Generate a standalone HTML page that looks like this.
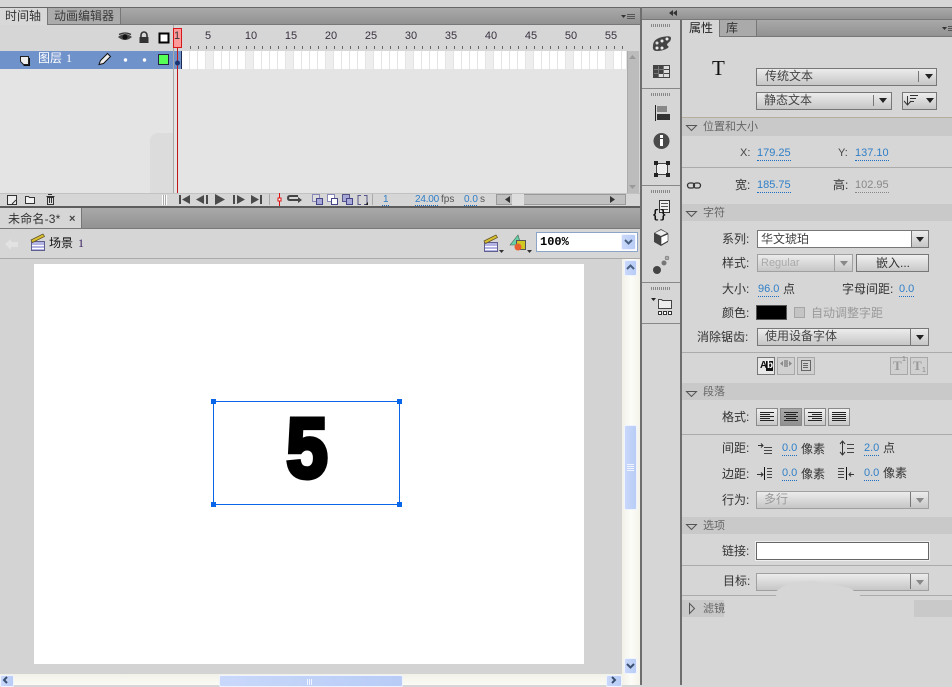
<!DOCTYPE html>
<html lang="zh">
<head>
<meta charset="utf-8">
<title>Flash</title>
<style>
html,body{margin:0;padding:0;}
body{width:952px;height:685px;overflow:hidden;position:relative;background:#d6d6d6;font-family:"Liberation Sans","WenQuanYi Zen Hei","Noto Sans CJK SC",sans-serif;font-size:12px;color:#333;}
.b{position:absolute;}
.t{position:absolute;height:16px;line-height:16px;white-space:nowrap;color:#333;}
.v{color:#2f7fc8;border-bottom:1px dotted #1f6fc0;height:13px;line-height:13px;}
.r{position:absolute;top:29px;width:30px;text-align:center;font-size:11px;line-height:14px;color:#3a3040;}
.tabbar{background:linear-gradient(#a9a9a9,#929292);}
.sec{position:absolute;left:682px;width:270px;background:#c9c9c9;}
.sec span{position:absolute;left:21px;top:1px;line-height:16px;font-size:11px;color:#666;}
.line{position:absolute;left:682px;width:270px;height:1px;background:#ababab;}
.sel{position:absolute;box-sizing:border-box;border:1px solid #777;background:linear-gradient(#ececec,#c6c6c6);height:18px;line-height:16px;color:#444;}
.sel span{position:absolute;top:-1px;white-space:nowrap;}
.sel.dis{border-color:#a0a0a0;color:#999;}
.btn{position:absolute;box-sizing:border-box;border:1px solid #8a8a8a;background:linear-gradient(#f0f0f0,#c8c8c8);}
.xbtn{position:absolute;box-sizing:border-box;border:1px solid #eef3ff;border-radius:2px;background:linear-gradient(90deg,#c9d8fa,#b8ccf6);}
svg.o{position:absolute;left:0;top:0;}
</style>
</head>
<body>
<!-- timeline -->
<div class="b" style="left:0;top:7px;width:640px;height:1px;background:#666"></div>
<div class="b tabbar" style="left:0;top:8px;width:640px;height:16px"></div>
<div class="b" style="left:0;top:24px;width:640px;height:1px;background:#777"></div>
<div class="b" style="left:0;top:8px;width:47px;height:17px;background:#d8d8d8"></div>
<div class="b" style="left:47px;top:8px;width:74px;height:16px;background:#ababab;border-left:1px solid #777;border-right:1px solid #777;box-sizing:border-box"></div>
<div class="t" style="left:5px;top:8px">时间轴</div>
<div class="t" style="left:54px;top:8px;color:#3a3a3a">动画编辑器</div>
<div class="b" style="left:0;top:25px;width:640px;height:26px;background:#d6d6d6"></div>
<div class="b" style="left:0;top:51px;width:638px;height:142px;background:#e4e4e4"></div>
<div class="b" style="left:638px;top:51px;width:2px;height:142px;background:#d6d6d6"></div>
<div class="b" style="left:150px;top:133px;width:24px;height:60px;background:#dcdcdc;border-top-left-radius:8px"></div>
<div class="b" style="left:0;top:51px;width:174px;height:18px;background:#7092ca"></div>
<div class="b" style="left:174px;top:51px;width:452px;height:18px;background:repeating-linear-gradient(90deg,#fff 0,#fff 7px,#e4e4e4 7px,#e4e4e4 8px,#fff 8px,#fff 15px,#e4e4e4 15px,#e4e4e4 16px,#fff 16px,#fff 23px,#e4e4e4 23px,#e4e4e4 24px,#fff 24px,#fff 31px,#e4e4e4 31px,#e4e4e4 32px,#eeeeee 32px,#eeeeee 39px,#e4e4e4 39px,#e4e4e4 40px)"></div>
<div class="b" style="left:174px;top:51px;width:7px;height:18px;background:#7092ca"></div>
<div class="b" style="left:181px;top:51px;width:1px;height:18px;background:#1a2a55"></div>
<div class="b" style="left:173px;top:25px;width:1px;height:181px;background:#a8a8a8"></div>
<div class="t" style="left:38px;top:50px;color:#fff">图层</div>
<div class="t" style="left:66px;top:50px;color:#fff;font-family:'Liberation Serif',serif">1</div>
<div class="b" style="left:173px;top:28px;width:9px;height:20px;box-sizing:border-box;background:#ff9a9a;border:1px solid #d81818"></div>
<div class="r" style="left:162px;color:#333">1</div>
<div class="r" style="left:193px">5</div><div class="r" style="left:236px">10</div><div class="r" style="left:276px">15</div><div class="r" style="left:316px">20</div><div class="r" style="left:356px">25</div><div class="r" style="left:396px">30</div><div class="r" style="left:436px">35</div><div class="r" style="left:476px">40</div><div class="r" style="left:516px">45</div><div class="r" style="left:556px">50</div><div class="r" style="left:596px">55</div>
<div class="b" style="left:190px;top:46px;width:436px;height:3px;background:repeating-linear-gradient(90deg,#666 0,#666 1px,transparent 1px,transparent 8px)"></div>
<div class="b" style="left:627px;top:51px;width:11px;height:142px;background:#bcbcbc;border-left:1px solid #aaa"></div>
<!-- timeline control row -->
<div class="b" style="left:0;top:193px;width:640px;height:13px;background:#d6d6d6;border-top:1px solid #c2c2c2;box-sizing:border-box"></div>
<div class="b" style="left:0;top:206px;width:640px;height:2px;background:#5c5c5c"></div>
<div class="t" style="left:383px;top:192px;font-size:10px;color:#2f7fc8">1</div>
<div class="b" style="left:382px;top:205px;width:7px;border-top:1px dotted #1f6fc0"></div>
<div class="t" style="left:415px;top:192px;font-size:10px;color:#2f7fc8;letter-spacing:-.2px">24.00</div>
<div class="b" style="left:415px;top:205px;width:23px;border-top:1px dotted #1f6fc0"></div>
<div class="t" style="left:441px;top:192px;font-size:10px;color:#555">fps</div>
<div class="t" style="left:464px;top:192px;font-size:10px;color:#2f7fc8">0.0</div>
<div class="b" style="left:464px;top:205px;width:13px;border-top:1px dotted #1f6fc0"></div>
<div class="t" style="left:480px;top:192px;font-size:10px;color:#555">s</div>
<div class="b" style="left:496px;top:194px;width:130px;height:11px;background:#c0c0c0;border:1px solid #9a9a9a;box-sizing:border-box"></div>
<div class="b" style="left:512px;top:194px;width:12px;height:11px;background:#dedede"></div>
<!-- stage tabs -->
<div class="b tabbar" style="left:0;top:208px;width:640px;height:20px"></div>
<div class="b" style="left:0;top:208px;width:82px;height:21px;background:#d6d6d6;border-right:1px solid #777;box-sizing:border-box"></div>
<div class="t" style="left:8px;top:211px;letter-spacing:.2px">未命名-3*</div>
<div class="t" style="left:69px;top:211px;font-size:11px;color:#444;font-weight:bold">×</div>
<div class="b" style="left:0;top:228px;width:640px;height:1px;background:#7a7a7a"></div>
<div class="t" style="left:49px;top:235px;color:#111">场景</div>
<div class="t" style="left:78px;top:235px;color:#3a2060;font-family:'Liberation Serif',serif">1</div>
<div class="b" style="left:536px;top:232px;width:102px;height:20px;box-sizing:border-box;background:#fff;border:1px solid #8aa5c8"></div>
<div class="t" style="left:540px;top:234px;font:bold 12px/16px 'Liberation Mono',monospace;color:#000">100%</div>
<div class="xbtn" style="left:621px;top:234px;width:15px;height:16px"></div>
<!-- stage -->
<div class="b" style="left:0;top:258px;width:640px;height:1px;background:#aaa"></div>
<div class="b" style="left:0;top:259px;width:622px;height:415px;background:#d3d3d3"></div>
<div class="b" style="left:34px;top:264px;width:550px;height:400px;background:#fff"></div>
<div class="b" style="left:213px;top:401px;width:187px;height:104px;box-sizing:border-box;border:1px solid #0a66e8"></div>
<div class="b" style="left:211px;top:399px;width:5px;height:5px;background:#0a66e8"></div>
<div class="b" style="left:397px;top:399px;width:5px;height:5px;background:#0a66e8"></div>
<div class="b" style="left:211px;top:502px;width:5px;height:5px;background:#0a66e8"></div>
<div class="b" style="left:397px;top:502px;width:5px;height:5px;background:#0a66e8"></div>
<div class="b" style="left:270px;top:393px;width:74px;height:110px;text-align:center;font:bold 84px/110px 'Liberation Sans',sans-serif;color:#000;-webkit-text-stroke:5px #000;transform:scaleX(.88)">5</div>
<!-- scrollbars -->
<div class="b" style="left:622px;top:259px;width:18px;height:426px;background:linear-gradient(90deg,#f2f1e8,#fcfcf8 50%,#f4f3ea)"></div>
<div class="b" style="left:0;top:674px;width:622px;height:11px;background:linear-gradient(#f2f1e8,#fbfbf6)"></div>
<div class="xbtn" style="left:624px;top:260px;width:13px;height:16px"></div>
<div class="xbtn" style="left:624px;top:425px;width:13px;height:85px"></div>
<div class="xbtn" style="left:624px;top:658px;width:13px;height:16px"></div>
<div class="xbtn" style="left:0;top:675px;width:14px;height:12px"></div>
<div class="xbtn" style="left:219px;top:675px;width:184px;height:12px"></div>
<div class="xbtn" style="left:606px;top:675px;width:16px;height:12px"></div>
<!-- dock -->
<div class="b" style="left:640px;top:7px;width:2px;height:678px;background:#6e6e6e"></div>
<div class="b" style="left:680px;top:20px;width:2px;height:665px;background:#6e6e6e"></div>
<div class="b" style="left:642px;top:7px;width:310px;height:1px;background:#666"></div>
<div class="b tabbar" style="left:642px;top:8px;width:310px;height:11px"></div>
<div class="b" style="left:642px;top:19px;width:310px;height:1px;background:#777"></div>
<div class="b" style="left:642px;top:88px;width:38px;height:1px;background:#888"></div>
<div class="b" style="left:642px;top:185px;width:38px;height:1px;background:#888"></div>
<div class="b" style="left:642px;top:282px;width:38px;height:1px;background:#888"></div>
<div class="b" style="left:642px;top:323px;width:38px;height:1px;background:#888"></div>
<!-- properties tabs -->
<div class="b tabbar" style="left:682px;top:20px;width:270px;height:16px"></div>
<div class="b" style="left:682px;top:36px;width:270px;height:1px;background:#777"></div>
<div class="b" style="left:682px;top:20px;width:37px;height:17px;background:#d6d6d6"></div>
<div class="b" style="left:719px;top:20px;width:38px;height:16px;box-sizing:border-box;background:#aaa;border-left:1px solid #777;border-right:1px solid #777"></div>
<div class="t" style="left:689px;top:20px;color:#222">属性</div>
<div class="t" style="left:726px;top:20px;color:#333">库</div>
<div class="t" style="left:712px;top:58px;height:20px;font:normal 21px/20px 'Liberation Serif',serif;color:#111">T</div>
<div class="sel" style="left:756px;top:68px;width:181px"><span style="left:8px">传统文本</span></div>
<div class="sel" style="left:756px;top:92px;width:136px"><span style="left:7px">静态文本</span></div>
<div class="sel" style="left:902px;top:92px;width:35px"></div>
<div class="b" style="left:682px;top:117px;width:270px;height:1px;background:#b5ae9c"></div>
<div class="sec" style="top:118px;height:18px"><span>位置和大小</span></div>
<div class="t" style="left:740px;top:145px;font-size:11px;color:#444">X:</div>
<div class="t v" style="left:757px;top:147px;font-size:11px">179.25</div>
<div class="t" style="left:838px;top:145px;font-size:11px;color:#444">Y:</div>
<div class="t v" style="left:855px;top:147px;font-size:11px">137.10</div>
<div class="line" style="top:167px"></div>
<div class="t" style="left:735px;top:177px">宽:</div>
<div class="t v" style="left:757px;top:179px;font-size:11px">185.75</div>
<div class="t" style="left:833px;top:177px">高:</div>
<div class="t v" style="left:855px;top:179px;font-size:11px;color:#888;border-color:#888">102.95</div>
<div class="sec" style="top:204px;height:17px"><span>字符</span></div>
<div class="t" style="left:722px;top:231px">系列:</div>
<div class="b" style="left:757px;top:230px;width:172px;height:18px;box-sizing:border-box;border:1px solid #777;background:#fff"></div>
<div class="t" style="left:761px;top:231px;color:#444">华文琥珀</div>
<div class="sel" style="left:911px;top:230px;width:18px"></div>
<div class="t" style="left:722px;top:255px">样式:</div>
<div class="sel dis" style="left:757px;top:254px;width:96px"><span style="left:3px;top:0;font-size:11px;color:#aaa">Regular</span></div>
<div class="b" style="left:834px;top:255px;width:1px;height:16px;background:#a0a0a0"></div>
<div class="btn" style="left:856px;top:254px;width:73px;height:18px;border-color:#777"></div>
<div class="t" style="left:876px;top:255px;color:#333">嵌入...</div>
<div class="t" style="left:722px;top:281px">大小:</div>
<div class="t v" style="left:758px;top:283px;font-size:11px">96.0</div>
<div class="t" style="left:783px;top:281px">点</div>
<div class="t" style="left:842px;top:281px">字母间距:</div>
<div class="t v" style="left:899px;top:283px;font-size:11px">0.0</div>
<div class="t" style="left:722px;top:305px">颜色:</div>
<div class="b" style="left:756px;top:305px;width:31px;height:15px;background:#000;border:1px solid #555;box-sizing:border-box"></div>
<div class="b" style="left:794px;top:307px;width:11px;height:11px;background:#c4c4c4;border:1px solid #a5a5a5;box-sizing:border-box"></div>
<div class="t" style="left:811px;top:305px;color:#999">自动调整字距</div>
<div class="t" style="left:697px;top:329px">消除锯齿:</div>
<div class="sel" style="left:757px;top:328px;width:172px"><span style="left:7px">使用设备字体</span></div>
<div class="line" style="top:352px"></div>
<div class="b" style="left:757px;top:357px;width:18px;height:18px;box-sizing:border-box;border:1px solid #777;background:#e8e8e8"></div>
<div class="b" style="left:777px;top:357px;width:18px;height:18px;box-sizing:border-box;border:1px solid #a8a8a8;background:#d0d0d0"></div>
<div class="b" style="left:797px;top:357px;width:18px;height:18px;box-sizing:border-box;border:1px solid #a8a8a8;background:#d0d0d0"></div>
<div class="b" style="left:890px;top:357px;width:18px;height:18px;box-sizing:border-box;border:1px solid #a8a8a8;background:#d0d0d0"></div>
<div class="b" style="left:910px;top:357px;width:18px;height:18px;box-sizing:border-box;border:1px solid #a8a8a8;background:#d0d0d0"></div>
<div class="b" style="left:766px;top:361px;width:7px;height:10px;background:#111"></div>
<div class="t" style="left:760px;top:358px;font:bold 10px/16px 'Liberation Sans',sans-serif;color:#111">A</div>
<div class="t" style="left:767px;top:358px;font:bold 10px/16px 'Liberation Sans',sans-serif;color:#fff">b</div>
<div class="t" style="left:893px;top:358px;font:bold 13px/16px 'Liberation Serif',serif;color:#999">T</div>
<div class="t" style="left:913px;top:358px;font:bold 13px/16px 'Liberation Serif',serif;color:#999">T</div>
<div class="t" style="left:902px;top:355px;font:7px/10px 'Liberation Sans',sans-serif;color:#888;height:10px">1</div>
<div class="t" style="left:922px;top:366px;font:7px/10px 'Liberation Sans',sans-serif;color:#888;height:10px">1</div>
<div class="sec" style="top:383px;height:17px"><span>段落</span></div>
<div class="t" style="left:722px;top:409px">格式:</div>
<div class="btn" style="left:756px;top:408px;width:22px;height:18px"></div>
<div class="btn" style="left:780px;top:408px;width:22px;height:18px;background:linear-gradient(#a8a8a8,#909090)"></div>
<div class="btn" style="left:804px;top:408px;width:22px;height:18px"></div>
<div class="btn" style="left:828px;top:408px;width:22px;height:18px"></div>
<div class="line" style="top:434px"></div>
<div class="t" style="left:722px;top:440px">间距:</div>
<div class="t v" style="left:782px;top:442px;font-size:11px">0.0</div>
<div class="t" style="left:801px;top:441px">像素</div>
<div class="t v" style="left:864px;top:442px;font-size:11px">2.0</div>
<div class="t" style="left:883px;top:440px">点</div>
<div class="t" style="left:722px;top:466px">边距:</div>
<div class="t v" style="left:782px;top:467px;font-size:11px">0.0</div>
<div class="t" style="left:801px;top:466px">像素</div>
<div class="t v" style="left:864px;top:467px;font-size:11px">0.0</div>
<div class="t" style="left:883px;top:465px">像素</div>
<div class="t" style="left:722px;top:492px">行为:</div>
<div class="sel dis" style="left:756px;top:491px;width:173px"><span style="left:7px">多行</span></div>
<div class="sec" style="top:517px;height:17px"><span>选项</span></div>
<div class="t" style="left:722px;top:543px">链接:</div>
<div class="b" style="left:756px;top:542px;width:173px;height:18px;box-sizing:border-box;background:#fff;border:1px solid #666;box-shadow:0 0 0 1px #eee"></div>
<div class="line" style="top:565px"></div>
<div class="t" style="left:723px;top:573px">目标:</div>
<div class="sel dis" style="left:756px;top:573px;width:173px"></div>
<div class="line" style="top:595px"></div>
<div class="b" style="left:682px;top:600px;width:42px;height:17px;background:#c9c9c9"></div>
<div class="b" style="left:914px;top:600px;width:38px;height:17px;background:#c9c9c9"></div>
<div class="t" style="left:703px;top:601px;font-size:11px;color:#666">滤镜</div>
<!-- icons overlay -->
<svg class="o" width="952" height="685" viewBox="0 0 952 685" xmlns="http://www.w3.org/2000/svg">
<!-- retouched blot over target select -->
<path d="M775 592Q785 584 795 582Q805 581 812 581Q822 582 830 584L850 588L862 597L777 598Z" fill="#d6d6d6"/>
<!-- panel menu icons -->
<path d="M621 15h5l-2.500 3z" fill="#333"/><path d="M627 14.500h8M627 16.500h8M627 18.500h8" stroke="#555"/>
<path d="M942 27h5l-2.500 3z" fill="#333"/><path d="M948 26.500h4M948 28.500h4M948 30.500h4" stroke="#555"/>
<path d="M673 10v6l-4-3zM677 10v6l-4-3z" fill="#333"/>
<!-- eye lock outline -->
<path d="M118 37q7-6 14 0q-7 6-14 0z" fill="#444"/><circle cx="125" cy="37" r="2.500" fill="#111"/><path d="M119 34.500q6-3 12 0" stroke="#333" fill="none" stroke-width="1.300"/>
<path d="M141 37v-2a3 3 0 016 0v2" stroke="#333" fill="none" stroke-width="1.600"/><rect x="139.500" y="37" width="9" height="6" fill="#333"/>
<rect x="159.500" y="33.500" width="9" height="9" fill="#fff" stroke="#000" stroke-width="2"/>
<!-- layer row -->
<path d="M20.500 56.500h8v8h-5l-3-3z" fill="#eee" stroke="#222"/><path d="M29.500 58v7.500h-6" stroke="#111" fill="none"/>
<path d="M99 64.500l1.500-4 7-7 3 3-7 7z" fill="#eee" stroke="#111" stroke-width="1"/>
<circle cx="125.500" cy="60" r="1.700" fill="#fff"/><circle cx="144.500" cy="60" r="1.700" fill="#fff"/>
<rect x="158.500" y="54.500" width="10" height="10" fill="#55ff55" stroke="#224" />
<!-- keyframe, playhead -->
<line x1="177.500" y1="48" x2="177.500" y2="193" stroke="#c01818"/>
<circle cx="177.500" cy="63" r="2.500" fill="#1a3570"/>
<!-- tl scroll arrows -->
<path d="M629 59l3.500-4 3.500 4z" fill="#999"/><path d="M629 185l3.500 4 3.500-4z" fill="#999"/>
<!-- new layer / folder / trash -->
<path d="M7.500 195.500h9v9h-9z" fill="#eee" stroke="#333"/><path d="M12 204l4-4" stroke="#333"/>
<path d="M25.500 196.500h3l1 1h5v6h-9z" fill="#f2f2f2" stroke="#333"/>
<path d="M46.500 196.500h8M47.500 197.500h6v7h-6z" fill="#ddd" stroke="#333"/><path d="M49.500 198v5M51.500 198v5M48 194.500h4" stroke="#333"/>
<path d="M162.500 195v10M164.500 195v10M166.500 195v10" stroke="#fff"/><path d="M163.500 195v10M165.500 195v10" stroke="#aaa"/>
<!-- transport -->
<g fill="#4a4a4a"><rect x="179" y="195" width="2" height="9"/><path d="M190 195v9l-8-4.500z"/>
<path d="M204 195v9l-8-4.500z"/><rect x="206" y="195" width="2" height="9"/>
<path d="M215 194v11l10-5.500z"/>
<rect x="233" y="195" width="2" height="9"/><path d="M237 195v9l8-4.500z"/>
<path d="M251 195v9l8-4.500z"/><rect x="260" y="195" width="2" height="9"/></g>
<path d="M269.500 194v11" stroke="#aaa"/>
<path d="M279.500 193v13" stroke="#e01010"/><rect x="278" y="198" width="3" height="3" fill="#fff" stroke="#e01010"/>
<path d="M298 196h-8q-2 0-2 2q0 2 2 2h8" fill="none" stroke="#444" stroke-width="2"/><path d="M298 197v6l4-3z" fill="#444"/>
<rect x="312.500" y="194.500" width="7" height="7" fill="#ddd" stroke="#8888b8"/><rect x="316.500" y="198.500" width="6" height="6" fill="#a8a8d8" stroke="#444488"/>
<rect x="327.500" y="194.500" width="7" height="7" fill="#fff" stroke="#8888b8"/><rect x="331.500" y="198.500" width="6" height="6" fill="#fff" stroke="#444488"/>
<rect x="342.500" y="194.500" width="7" height="7" fill="#a8a8d8" stroke="#555588"/><rect x="346.500" y="198.500" width="6" height="6" fill="#a8a8d8" stroke="#444488"/>
<path d="M361 195.500h-3v9h3M364 195.500h3v9h-3" fill="none" stroke="#555588"/><path d="M368 205v-3l-3 3z" fill="#222"/>
<path d="M372.500 194v11" stroke="#aaa"/>
<path d="M510 196v7l-5-3.500zM610 196v7l5-3.500z" fill="#333"/>
<!-- edit bar -->
<path d="M5 244l6-5v3h7v5h-7v3z" fill="#e2e2e2"/>
<rect x="31.500" y="241.500" width="13" height="9" fill="#b4b4e4" stroke="#606090"/><path d="M32 245.500h12M32 248.500h12" stroke="#fff"/><path d="M31 240l12-6 1.500 2.500-12 6z" fill="#d8c030" stroke="#605020" stroke-width=".7"/>
<g transform="translate(453 1)"><rect x="31.500" y="241.500" width="13" height="9" fill="#b4b4e4" stroke="#606090"/><path d="M32 245.500h12M32 248.500h12" stroke="#fff"/><path d="M31 240l12-6 1.500 2.500-12 6z" fill="#d8c030" stroke="#605020" stroke-width=".7"/></g>
<path d="M499 250h5l-2.500 3zM527 250h5l-2.500 3z" fill="#333"/>
<path d="M510 245l8-10 3 10z" fill="#68d0a8" stroke="#406050" stroke-width=".6"/><rect x="516.500" y="240.500" width="9" height="9" fill="#d0c820" stroke="#555"/><circle cx="518" cy="247" r="3.500" fill="#e86030"/>
<path d="M625 240l3.500 3.500 3.500-3.500" fill="none" stroke="#4a6080" stroke-width="2"/>
<!-- scrollbars glyphs -->
<path d="M627 269l3.500-3.500 3.500 3.500" fill="none" stroke="#4a6080" stroke-width="2"/>
<path d="M627 664l3.500 3.500 3.500-3.500" fill="none" stroke="#3a5070" stroke-width="2"/>
<path d="M627 464.500h7M627 466.500h7M627 468.500h7M627 470.500h7" stroke="#f0f4ff"/>
<path d="M7 677l-3 3 3 3" fill="none" stroke="#3a5070" stroke-width="2"/>
<path d="M612 677l3 3-3 3" fill="none" stroke="#3a5070" stroke-width="2"/>
<path d="M307.500 679v6M309.500 679v6M311.500 679v6" stroke="#f0f4ff"/>
<!-- dock grips -->
<g stroke="#888" stroke-dasharray="1 1" stroke-width="3"><path d="M651 25.500h19M651 94.500h19M651 191.500h19M651 288.500h19"/></g>
<!-- palette -->
<path d="M653 46q0-7 9-9 9-2 9 1t-3 5q-2 2 0 3t-2 3q-4 2-9 2t-4-5z" fill="#444"/><circle cx="657" cy="48" r="1.500" fill="#eee"/><circle cx="662" cy="48" r="1.500" fill="#eee"/><circle cx="657" cy="43" r="1.500" fill="#ddd"/><circle cx="662" cy="41" r="1.500" fill="#eee"/><circle cx="667" cy="39" r="1.500" fill="#eee"/>
<!-- swatches -->
<rect x="653" y="65" width="17" height="13" fill="#444"/><path d="M664 66h5v3h-5zM664 70h5v3h-5zM659 74h10v3h-10z" fill="#ddd"/><path d="M654 69.500h9M654 73.500h4M658.500 66v11M663.500 66v11" stroke="#777"/>
<!-- align -->
<path d="M655.500 105v16" stroke="#222"/><rect x="657" y="106" width="10" height="6" fill="#888"/><rect x="657" y="114" width="13" height="6" fill="#333"/>
<!-- info -->
<circle cx="661.500" cy="141" r="8" fill="#4a4a4a"/><rect x="660" y="139" width="3" height="7" fill="#fff"/><rect x="660" y="135" width="3" height="3" fill="#fff"/>
<!-- transform -->
<rect x="656.500" y="163.500" width="11" height="11" fill="#eee" stroke="#444"/><path d="M654 161h4v4h-4zM666 161h4v4h-4zM654 173h4v4h-4zM666 173h4v4h-4z" fill="#222"/>
<!-- code -->
<rect x="659.500" y="200.500" width="10" height="12" fill="#eee" stroke="#333"/><path d="M661 203.500h7M661 206.500h7M661 209.500h7" stroke="#555"/><text x="652" y="218" font-family="Liberation Mono,monospace" font-weight="bold" font-size="12" fill="#111">{}</text>
<!-- cube -->
<path d="M654 233l7-4 7 4v9l-7 4-7-4z" fill="#444"/><path d="M661 230l6 3-6 3-6-3z" fill="#eee"/><path d="M661 237v8l7-4v-7z" fill="#fff" stroke="#333" stroke-width=".6"/>
<!-- motion -->
<circle cx="657" cy="270" r="4" fill="#444"/><circle cx="664" cy="263" r="2.500" fill="#777"/><circle cx="667" cy="258" r="2" fill="#aaa" stroke="#666" stroke-width=".5"/>
<!-- library -->
<path d="M651 298h5l-2.500 3z" fill="#222"/><path d="M658.500 299.500h3l1 1h9v8h-13z" fill="#eee" stroke="#444"/><path d="M658.500 311.500h3v3h-3zM663.500 311.500h3v3h-3zM668.500 311.500h3v3h-3z" fill="#fff" stroke="#333"/>
<!-- select arrows -->
<g fill="#222"><path d="M925 74h8l-4 5z"/><path d="M879 98h8l-4 5z"/><path d="M926 98h8l-4 5z"/><path d="M916 237h8l-4 5z"/><path d="M916 335h8l-4 5z"/></g>
<g fill="#888"><path d="M840 261h8l-4 5z"/><path d="M916 498h8l-4 5z"/><path d="M916 580h8l-4 5z"/></g>
<g stroke="#777"><path d="M918.500 71v11M873.500 95v11M911.500 231v16M910.500 329v16M910.500 492v15M910.500 574v15"/></g>
<path d="M907.500 96v8M904 101l3.500 4 3.500-4M910 95.500h8M910 98.500h6M910 101.500h4" stroke="#333" fill="none"/>
<!-- section triangles -->
<g fill="none" stroke="#555"><path d="M686.500 125.500h10l-5 5zM686.500 211.500h10l-5 5zM686.500 391.500h10l-5 5zM686.500 524.500h10l-5 5z"/><path d="M689.500 603.500v10l5-5z"/></g>
<!-- link icon -->
<rect x="687.500" y="183" width="7" height="5" rx="2.500" fill="none" stroke="#333" stroke-width="1.300"/><rect x="693.500" y="183" width="7" height="5" rx="2.500" fill="none" stroke="#333" stroke-width="1.300"/>
<!-- small buttons -->
<path d="M783 366l-3-2.500 3-2.500zM789 361l3 2.500-3 2.500z" fill="#888"/><rect x="784" y="360" width="4" height="7" fill="#999"/>
<path d="M801.500 360.500h9v10h-9zM803 363.500h5M803 365.500h5M803 367.500h5" fill="none" stroke="#666"/>
<!-- align buttons -->
<g stroke="#222"><path d="M760 412.500h14M760 414.500h10M760 416.500h14M760 418.500h10M760 420.500h14"/>
<path d="M784 412.500h14M786 414.500h10M784 416.500h14M786 418.500h10M784 420.500h14"/>
<path d="M808 412.500h14M812 414.500h10M808 416.500h14M812 418.500h10M808 420.500h14"/>
<path d="M832 412.500h14M832 414.500h14M832 416.500h14M832 418.500h14M832 420.500h14"/></g>
<!-- para icons -->
<path d="M758 445.500h5M761 443.500l2 2-2 2" stroke="#333" fill="none"/><path d="M764 447.500h8M764 450.500h8M764 453.500h8" stroke="#444"/>
<path d="M842.500 442v12M840 444l2.500-3 2.500 3M840 452l2.500 3 2.500-3" stroke="#333" fill="none"/><path d="M847 444.500h7M847 448.500h7M847 452.500h7" stroke="#444"/>
<path d="M757 474.500h6M761 472.500l2 2-2 2" stroke="#333" fill="none"/><path d="M764.500 467v13" stroke="#111"/><path d="M767 468.500h5M767 471.500h5M767 474.500h5M767 477.500h5" stroke="#444"/>
<path d="M838 468.500h6M838 471.500h6M838 474.500h6M838 477.500h6" stroke="#444"/><path d="M846.500 467v13" stroke="#111"/><path d="M854 474.500h-5M851 472.500l-2 2 2 2" stroke="#333" fill="none"/>
</svg>
</body>
</html>
